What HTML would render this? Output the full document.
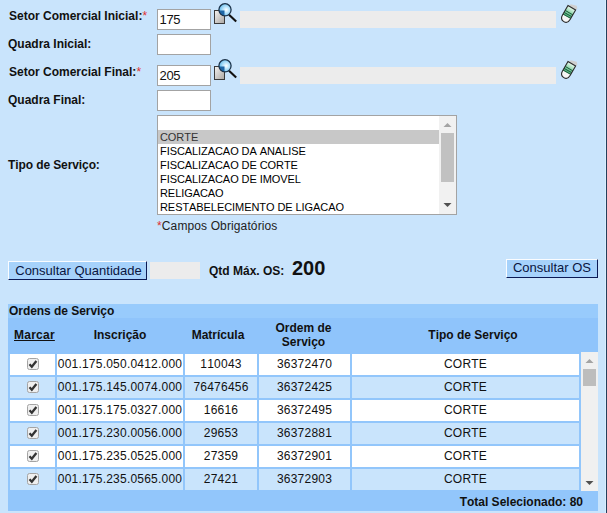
<!DOCTYPE html>
<html><head><meta charset="utf-8">
<style>
*{box-sizing:border-box;margin:0;padding:0}
html,body{width:607px;height:513px;overflow:hidden}
body{font-kerning:none;background:#c9e4fc;font-family:"Liberation Sans",sans-serif;font-size:12px;color:#000;position:relative}
.abs{position:absolute}
.lbl{position:absolute;font-weight:bold;font-size:12px;line-height:14px;color:#111;white-space:nowrap}
.req{color:#e03030;font-weight:normal}
.inp{position:absolute;background:#fff;border:1px solid #a3a3a3;font-size:13px;padding-left:1.5px;line-height:19px;color:#111;letter-spacing:-0.3px}
.gray{position:absolute;background:#ececec}
.sel{position:absolute;left:157px;top:115px;width:300px;height:100px;background:#fff;border:1px solid #a3a3a3}
.opt{position:absolute;left:0;width:282px;height:14px;font-size:11px;line-height:14px;padding-left:2px;white-space:nowrap;color:#000;letter-spacing:-0.07px}
.btn{position:absolute;background:#a6d2fb;border:1px solid #0b1a55;border-top-color:#fafcff;border-left-color:#fafcff;font-size:13px;text-align:center;white-space:nowrap;color:#0a1540}
.btn span{position:relative;top:-1px}
.panel{position:absolute;left:8px;top:304px;width:590px;height:207px;background:#92c6fb}
.td{position:absolute;height:21px;line-height:21px;text-align:center;font-size:12px;white-space:nowrap;overflow:hidden;color:#111;letter-spacing:0.22px}
.th{position:absolute;font-weight:bold;font-size:12px;line-height:14px;text-align:center;white-space:nowrap;color:#111}
svg{position:absolute;overflow:visible}
</style></head><body>
<div class="abs" style="left:605px;top:0;width:1px;height:513px;background:#d8eefe"></div>
<div class="abs" style="left:606px;top:0;width:1px;height:513px;background:#233f5c"></div>

<svg width="0" height="0" style="left:0;top:0">
  <defs>
    <linearGradient id="docg" x1="0" y1="0" x2="1" y2="1"><stop offset="0" stop-color="#f6f4f2"/><stop offset="1" stop-color="#aaa6a2"/></linearGradient>
    <radialGradient id="leng" cx="0.6" cy="0.5" r="0.6"><stop offset="0" stop-color="#ffffff"/><stop offset="0.25" stop-color="#d4f0ff"/><stop offset="0.7" stop-color="#8ed0f4"/><stop offset="1" stop-color="#5cb6e8"/></radialGradient>
    <linearGradient id="ergr" x1="0" y1="0" x2="0" y2="1"><stop offset="0" stop-color="#eefaf2"/><stop offset="0.45" stop-color="#9edcb6"/><stop offset="1" stop-color="#4aa878"/></linearGradient>
    <g id="mag">
      <rect x="0.5" y="7.5" width="10" height="13" fill="url(#docg)" stroke="#3a3a3a" stroke-width="1"/>
      <line x1="15" y1="11.8" x2="22.2" y2="18.6" stroke="#111" stroke-width="2.1"/>
      <circle cx="11" cy="6.8" r="6.1" fill="url(#leng)"/>
      <path d="M4.9 7.5 L10.5 7.5 L10.5 12.9 A6.1 6.1 0 0 1 4.9 7.5 Z" fill="#1e66a6"/>
      <circle cx="11" cy="6.8" r="6.1" fill="none" stroke="#1b3148" stroke-width="1.25"/>
    </g>
    <g id="eras">
      <g transform="translate(13.8 5.75) rotate(30)">
        <path d="M-3.6 0 L-2.6 -2.6 L3.2 -4.2 L5.2 -2.2 L4.4 0 Z" fill="#cfcfcf"/>
        <path d="M-4.4 0 L4.4 0 L4.4 11 Q4.4 16 0 16 Q-4.4 16 -4.4 11 Z" fill="#f6f6f6"/>
        <rect x="-4.4" y="0" width="8.8" height="10" fill="url(#ergr)"/>
        <line x1="-4.4" y1="5.6" x2="4.4" y2="5.6" stroke="#135a34" stroke-width="0.9"/>
        <line x1="-4.4" y1="7.8" x2="4.4" y2="7.8" stroke="#135a34" stroke-width="0.9"/>
        <line x1="-4.4" y1="9.8" x2="4.4" y2="9.8" stroke="#135a34" stroke-width="0.9"/>
        <path d="M-4.4 0 L4.4 0 L4.4 11 Q4.4 16 0 16 Q-4.4 16 -4.4 11 Z" fill="none" stroke="#2a2a2a" stroke-width="1.1"/>
      </g>
    </g>
    <g id="chk">
      <rect x="0.5" y="0.5" width="11" height="11" rx="2" fill="#efefef" stroke="#a4a4a4" stroke-width="1"/>
      <path d="M2.5 6.3 L4.8 8.7 L9.4 3.1" fill="none" stroke="#333" stroke-width="2.3"/>
    </g>
  </defs>
</svg>

<div class="lbl" style="left:9px;top:9px">Setor Comercial Inicial:<span class="req">*</span></div>
<div class="inp" style="left:157px;top:9px;width:54px;height:21px">175</div>
<svg width="24" height="22" style="left:214px;top:3px"><use href="#mag"/></svg>
<div class="gray" style="left:240px;top:11px;width:316px;height:17px"></div>
<svg width="24" height="24" style="left:558px;top:2px"><use href="#eras"/></svg>

<div class="lbl" style="left:8px;top:37px">Quadra Inicial:</div>
<div class="inp" style="left:157px;top:34px;width:54px;height:21px"></div>

<div class="lbl" style="left:9px;top:65px">Setor Comercial Final:<span class="req">*</span></div>
<div class="inp" style="left:157px;top:65px;width:54px;height:21px">205</div>
<svg width="24" height="22" style="left:214px;top:59px"><use href="#mag"/></svg>
<div class="gray" style="left:240px;top:67px;width:316px;height:17px"></div>
<svg width="24" height="24" style="left:558px;top:58px"><use href="#eras"/></svg>

<div class="lbl" style="left:8px;top:93px">Quadra Final:</div>
<div class="inp" style="left:157px;top:90px;width:54px;height:21px"></div>

<div class="sel">
  <div class="opt" style="top:14px;background:#c8c8c8;color:#333">CORTE</div>
  <div class="opt" style="top:28px">FISCALIZACAO DA ANALISE</div>
  <div class="opt" style="top:42px">FISCALIZACAO DE CORTE</div>
  <div class="opt" style="top:56px">FISCALIZACAO DE IMOVEL</div>
  <div class="opt" style="top:70px">RELIGACAO</div>
  <div class="opt" style="top:84px">RESTABELECIMENTO DE LIGACAO</div>
  <div class="abs" style="left:281px;top:0;width:17px;height:98px;background:#f1f1f1"></div>
  <div class="abs" style="left:283px;top:17px;width:13px;height:49px;background:#c1c1c1"></div>
  <svg width="17" height="98" style="left:281px;top:0"><path d="M4.5 11 L8.5 7 L12.5 11 Z" fill="#a3a3a3"/><path d="M4.5 87 L8.5 91 L12.5 87 Z" fill="#505050"/></svg>
</div>
<div class="lbl" style="left:8px;top:158px;letter-spacing:-0.1px">Tipo de Serviço:</div>
<div class="abs" style="left:157px;top:219px;font-size:12px;line-height:14px;color:#222;letter-spacing:0.12px"><span class="req">*</span>Campos Obrigatórios</div>

<div class="btn" style="left:8px;top:261px;width:139px;height:19px;line-height:17px"><span style="top:0;left:1px">Consultar Quantidade</span></div>
<div class="gray" style="left:150px;top:262px;width:50px;height:17px"></div>
<div class="lbl" style="left:209px;top:264px">Qtd Máx. OS:</div>
<div class="lbl" style="left:292px;top:257px;font-size:20px;line-height:22px">200</div>
<div class="btn" style="left:506px;top:259px;width:92px;height:19px;line-height:17px"><span>Consultar OS</span></div>

<div class="panel"></div>
<div class="abs" style="left:8px;top:304px;width:590px;height:14px;background:#98cbfc"></div>
<div class="abs" style="left:8px;top:318px;width:590px;height:36px;background:#8fc4fb"></div>
<div class="lbl" style="left:9px;top:304px;letter-spacing:-0.05px">Ordens de Serviço</div>
<div class="th" style="left:14px;top:328px;text-decoration:underline;letter-spacing:0.25px">Marcar</div>
<div class="th" style="left:57px;top:328px;width:126px">Inscrição</div>
<div class="th" style="left:182px;top:328px;width:72px">Matrícula</div>
<div class="th" style="left:258px;top:321px;width:91px;line-height:14.4px">Ordem de<br>Serviço</div>
<div class="th" style="left:352px;top:328px;width:242px">Tipo de Serviço</div>
<div class="td" style="left:10px;top:354px;width:45px;background:#ffffff"></div>
<svg width="12" height="12" style="left:27px;top:358px"><use href="#chk"/></svg>
<div class="td" style="left:57px;top:354px;width:126px;background:#ffffff">001.175.050.0412.000</div>
<div class="td" style="left:185px;top:354px;width:72px;background:#ffffff">110043</div>
<div class="td" style="left:259px;top:354px;width:91px;background:#ffffff">36372470</div>
<div class="td" style="left:352px;top:354px;width:227px;background:#ffffff">CORTE</div>
<div class="td" style="left:10px;top:377px;width:45px;background:#c9e4fc"></div>
<svg width="12" height="12" style="left:27px;top:381px"><use href="#chk"/></svg>
<div class="td" style="left:57px;top:377px;width:126px;background:#c9e4fc">001.175.145.0074.000</div>
<div class="td" style="left:185px;top:377px;width:72px;background:#c9e4fc">76476456</div>
<div class="td" style="left:259px;top:377px;width:91px;background:#c9e4fc">36372425</div>
<div class="td" style="left:352px;top:377px;width:227px;background:#c9e4fc">CORTE</div>
<div class="td" style="left:10px;top:400px;width:45px;background:#ffffff"></div>
<svg width="12" height="12" style="left:27px;top:404px"><use href="#chk"/></svg>
<div class="td" style="left:57px;top:400px;width:126px;background:#ffffff">001.175.175.0327.000</div>
<div class="td" style="left:185px;top:400px;width:72px;background:#ffffff">16616</div>
<div class="td" style="left:259px;top:400px;width:91px;background:#ffffff">36372495</div>
<div class="td" style="left:352px;top:400px;width:227px;background:#ffffff">CORTE</div>
<div class="td" style="left:10px;top:423px;width:45px;background:#c9e4fc"></div>
<svg width="12" height="12" style="left:27px;top:427px"><use href="#chk"/></svg>
<div class="td" style="left:57px;top:423px;width:126px;background:#c9e4fc">001.175.230.0056.000</div>
<div class="td" style="left:185px;top:423px;width:72px;background:#c9e4fc">29653</div>
<div class="td" style="left:259px;top:423px;width:91px;background:#c9e4fc">36372881</div>
<div class="td" style="left:352px;top:423px;width:227px;background:#c9e4fc">CORTE</div>
<div class="td" style="left:10px;top:446px;width:45px;background:#ffffff"></div>
<svg width="12" height="12" style="left:27px;top:450px"><use href="#chk"/></svg>
<div class="td" style="left:57px;top:446px;width:126px;background:#ffffff">001.175.235.0525.000</div>
<div class="td" style="left:185px;top:446px;width:72px;background:#ffffff">27359</div>
<div class="td" style="left:259px;top:446px;width:91px;background:#ffffff">36372901</div>
<div class="td" style="left:352px;top:446px;width:227px;background:#ffffff">CORTE</div>
<div class="td" style="left:10px;top:469px;width:45px;background:#c9e4fc"></div>
<svg width="12" height="12" style="left:27px;top:473px"><use href="#chk"/></svg>
<div class="td" style="left:57px;top:469px;width:126px;background:#c9e4fc">001.175.235.0565.000</div>
<div class="td" style="left:185px;top:469px;width:72px;background:#c9e4fc">27421</div>
<div class="td" style="left:259px;top:469px;width:91px;background:#c9e4fc">36372903</div>
<div class="td" style="left:352px;top:469px;width:227px;background:#c9e4fc">CORTE</div>
<div class="abs" style="left:581px;top:352px;width:17px;height:139px;background:#f0f0f0"></div>
<div class="abs" style="left:583px;top:369px;width:13px;height:17px;background:#bdbdbd"></div>
<svg width="17" height="139" style="left:581px;top:352px"><path d="M4.5 11 L8.5 7 L12.5 11 Z" fill="#a3a3a3"/><path d="M4.5 129 L8.5 133 L12.5 129 Z" fill="#505050"/></svg>
<div class="th" style="left:400px;top:495px;width:183px;text-align:right">Total Selecionado: 80</div>
</body></html>
